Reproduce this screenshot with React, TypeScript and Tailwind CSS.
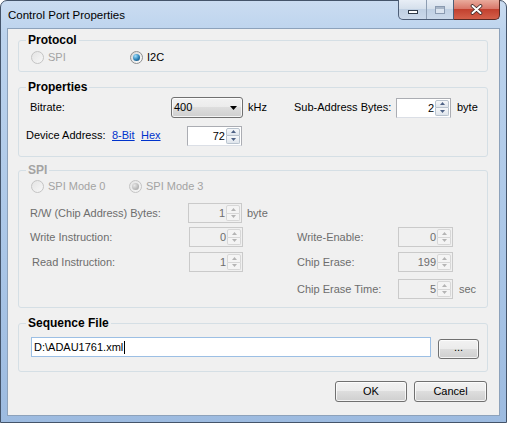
import type { ReactNode } from "react";

function Radio({
  label,
  checked,
  disabled,
  w,
}: {
  label: string;
  checked?: boolean;
  disabled?: boolean;
  w: string;
}) {
  return (
    <div className={`flex h-[14px] items-center ${w}`}>
      <span
        className={`flex h-[13px] w-[13px] items-center justify-center rounded-full border ${
          disabled
            ? "border-[#c4c4c4] bg-[linear-gradient(135deg,#e4e4e4,#f7f7f7)]"
            : "border-[#8e8f8f] bg-[linear-gradient(135deg,#d6d6d6,#ffffff)]"
        }`}
      >
        {checked && (
          <span
            className={`h-[7px] w-[7px] rounded-full ${
              disabled
                ? "bg-[radial-gradient(circle_at_35%_35%,#e8e8e8,#9a9a9a)]"
                : "bg-[radial-gradient(circle_at_35%_30%,#9fe0ff,#2a7fb4_55%,#123f63)]"
            }`}
          />
        )}
      </span>
      <span className={`ml-[4px] ${disabled ? "text-[#a3a3a3]" : "text-black"}`}>{label}</span>
    </div>
  );
}

function Arrow({ up, color }: { up?: boolean; color: string }) {
  return (
    <svg width="5" height="3" viewBox="0 0 5 3">
      <path d={up ? "M0 3L2.5 0L5 3Z" : "M0 0L2.5 3L5 0Z"} fill={color} />
    </svg>
  );
}

function SpinBox({ value, w, disabled }: { value: string; w: string; disabled?: boolean }) {
  const btn = disabled
    ? "border-[#d7d7d7] bg-[#f4f4f4]"
    : "border-[#b9c3ce] bg-[linear-gradient(#f6f8fa,#dfe5ec)]";
  const arrow = disabled ? "#b4b4b4" : "#4d6185";
  return (
    <div
      className={`flex h-[20px] ${w} border ${
        disabled
          ? "border-[#cacaca] bg-[#f0f0f0] text-[#6d6d6d]"
          : "border-[#abadb3] border-b-[#dbdfe6] bg-white text-black"
      }`}
    >
      <div className="flex-1 pr-[1px] text-right leading-[18px]">{value}</div>
      <div className="flex w-[15px] flex-col py-[1px] pr-[1px]">
        <div className={`flex flex-1 items-center justify-center rounded-t-[2px] border ${btn}`}>
          <Arrow up color={arrow} />
        </div>
        <div className={`flex flex-1 items-center justify-center rounded-b-[2px] border border-t-0 ${btn}`}>
          <Arrow color={arrow} />
        </div>
      </div>
    </div>
  );
}

function Button({ children, w, h }: { children: ReactNode; w: string; h: string }) {
  return (
    <div
      className={`flex ${w} ${h} items-center justify-center rounded-[3px] border border-[#707070] bg-[linear-gradient(#f2f2f2_0%,#ebebeb_50%,#dddddd_50%,#cfcfcf_100%)] shadow-[inset_0_0_0_1px_rgba(255,255,255,0.75)]`}
    >
      {children}
    </div>
  );
}

function Group({
  title,
  disabled,
  className,
  children,
}: {
  title: string;
  disabled?: boolean;
  className: string;
  children: ReactNode;
}) {
  return (
    <fieldset className={`rounded-[3px] border border-[#d5dfe5] ${className}`}>
      <legend
        className={`ml-[7px] px-[2px] text-[12px] font-bold leading-[14px] ${
          disabled ? "text-[#a3a3a3]" : "text-black"
        }`}
      >
        {title}
      </legend>
      {children}
    </fieldset>
  );
}

export default function App() {
  return (
    <div className="flex h-[423px] w-[507px] flex-col rounded-t-[7px] border border-[#44546a] bg-[linear-gradient(180deg,#cadcf1_0%,#bcd3ed_8%,#aac6e7_60%,#9dbbe0_100%)] px-[6px] pb-[6px] font-['Liberation_Sans',Arial,sans-serif] text-[11px] text-black">
      {/* title bar */}
      <div className="flex h-[27px] items-start">
        <div className="flex-1 pl-[1px] pt-[7px] text-[11.5px] leading-[14px]">Control Port Properties</div>
        <div className="-mt-px flex h-[20px]">
          <div className="flex overflow-hidden rounded-bl-[5px] border border-t-0 border-[#4e5f78] bg-[linear-gradient(#e8eef6_0%,#d6e0ec_45%,#c0d0e3_50%,#cbd9ea_100%)]">
            <div className="flex w-[28px] items-end justify-center border-r border-[#8d9db2] pb-[5px]">
              <div className="h-[4px] w-[10px] border border-[#2f3a48] bg-white" />
            </div>
            <div className="flex w-[26px] items-center justify-center">
              <div className="h-[8px] w-[10px] border border-[#8a9ab0] bg-[#dbe4ef] shadow-[inset_0_2px_0_#a8b6c8]" />
            </div>
          </div>
          <div className="flex w-[46px] items-center justify-center rounded-br-[5px] border border-l-0 border-t-0 border-[#5b2a24] bg-[linear-gradient(#e9ab9c_0%,#d9786a_45%,#c2412f_50%,#d4604a_100%)]">
            <svg width="13" height="11" viewBox="0 0 13 11">
              <path d="M2.5 2L10.5 9M10.5 2L2.5 9" stroke="#3b2a28" strokeWidth="3.6" strokeLinecap="round" />
              <path d="M2.5 2L10.5 9M10.5 2L2.5 9" stroke="#ffffff" strokeWidth="2" strokeLinecap="round" />
            </svg>
          </div>
        </div>
      </div>

      {/* client area */}
      <div className="flex flex-1 flex-col border border-[#8da2bb] bg-[#f0f0f0] pl-[10px] pr-[11px]">
        <Group title="Protocol" className="mt-[4px] pb-[7px] pt-[3px]">
          <div className="flex pl-[12px]">
            <Radio label="SPI" disabled w="w-[99px]" />
            <Radio label="I2C" checked w="w-[99px]" />
          </div>
        </Group>

        <Group title="Properties" className="mt-[8px] pb-[10px] pt-[3px]">
          <div className="flex h-[21px] items-center">
            <span className="ml-[11px] w-[141px]">Bitrate:</span>
            <div className="flex h-[21px] w-[72px] items-center rounded-[3px] border border-[#707070] bg-[linear-gradient(#f2f2f2_0%,#ebebeb_50%,#dddddd_50%,#cfcfcf_100%)] pl-[2px] pr-[5px] shadow-[inset_0_0_0_1px_rgba(255,255,255,0.75)]">
              <span className="flex-1">400</span>
              <svg width="7" height="4" viewBox="0 0 7 4">
                <path d="M0 0H7L3.5 4Z" fill="#000" />
              </svg>
            </div>
            <span className="ml-[5px] w-[46px]">kHz</span>
            <span className="w-[102px]">Sub-Address Bytes:</span>
            <SpinBox value="2" w="w-[55px]" />
            <span className="ml-[6px]">byte</span>
          </div>
          <div className="mt-[7px] flex h-[21px] items-center">
            <span className="ml-[7px] w-[86px]">Device Address:</span>
            <span className="w-[29px] text-[#0033cc] underline">8-Bit</span>
            <span className="w-[46px] text-[#0033cc] underline">Hex</span>
            <SpinBox value="72" w="w-[55px]" />
          </div>
        </Group>

        <Group title="SPI" disabled className="mt-[6px] pb-[8px] pt-[2px] text-[#6d6d6d]">
          <div className="flex pl-[12px]">
            <Radio label="SPI Mode 0" disabled w="w-[98px]" />
            <Radio label="SPI Mode 3" checked disabled w="w-[98px]" />
          </div>
          <div className="mt-[10px] flex h-[20px] items-center">
            <span className="ml-[11px] w-[158px]">R/W (Chip Address) Bytes:</span>
            <SpinBox value="1" w="w-[54px]" disabled />
            <span className="ml-[5px]">byte</span>
          </div>
          <div className="mt-[4px] flex h-[20px] items-center">
            <div className="flex w-[278px] items-center">
              <span className="ml-[11px] w-[159px]">Write Instruction:</span>
              <SpinBox value="0" w="w-[54px]" disabled />
            </div>
            <span className="w-[101px]">Write-Enable:</span>
            <SpinBox value="0" w="w-[55px]" disabled />
          </div>
          <div className="mt-[5px] flex h-[20px] items-center">
            <div className="flex w-[278px] items-center">
              <span className="ml-[13px] w-[157px]">Read Instruction:</span>
              <SpinBox value="1" w="w-[54px]" disabled />
            </div>
            <span className="w-[101px]">Chip Erase:</span>
            <SpinBox value="199" w="w-[55px]" disabled />
          </div>
          <div className="mt-[7px] flex h-[20px] items-center">
            <div className="w-[278px]" />
            <span className="w-[101px]">Chip Erase Time:</span>
            <SpinBox value="5" w="w-[55px]" disabled />
            <span className="ml-[6px]">sec</span>
          </div>
        </Group>

        <Group title="Sequence File" className="mt-[8px] pb-[12px] pt-[7px]">
          <div className="flex items-start pl-[12px]">
            <div className="flex h-[20px] w-[400px] items-center border border-[#9cbfe4] bg-white pl-[2px]">
              <span>D:\ADAU1761.xml</span>
              <span className="ml-[1px] h-[13px] w-[1px] bg-black" />
            </div>
            <div className="ml-[7px] mt-[2px]">
              <Button w="w-[41px]" h="h-[20px]">
                <span className="-mt-[4px]">...</span>
              </Button>
            </div>
          </div>
        </Group>

        <div className="mt-[9px] flex justify-end gap-[7px] pr-[1px]">
          <Button w="w-[72px]" h="h-[21px]">OK</Button>
          <Button w="w-[73px]" h="h-[21px]">Cancel</Button>
        </div>
      </div>
    </div>
  );
}
